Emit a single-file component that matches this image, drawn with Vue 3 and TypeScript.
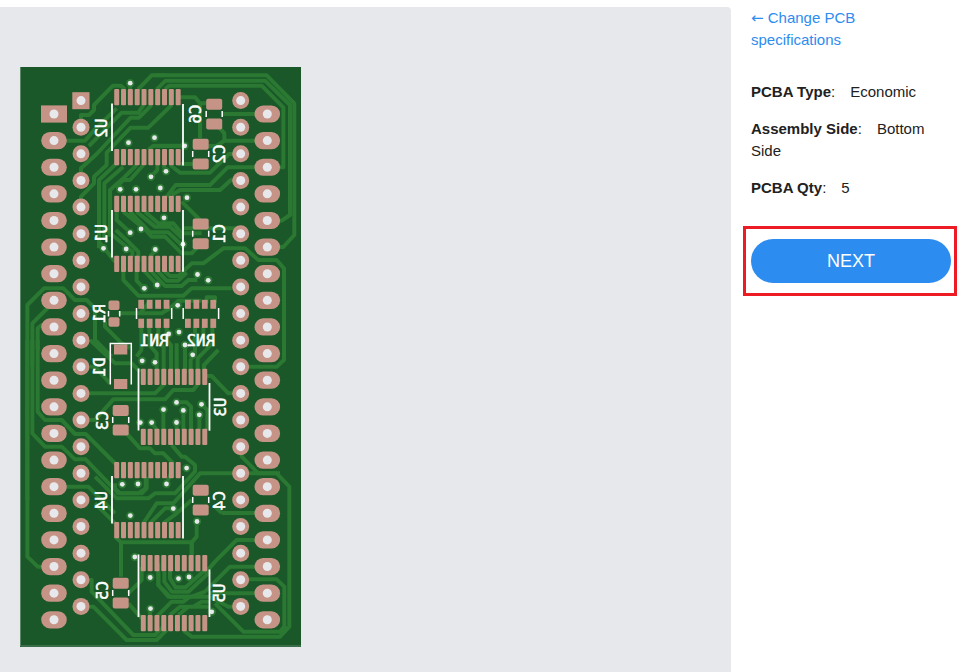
<script setup lang="ts">
interface Chip { x: number; y: number; lines: [number, number, number][] }
interface Trace { x: number; y: number; d: string }
interface Label { t: string; x: number; y: number }

const specs = [
  { label: 'PCBA Type', value: 'Economic' },
  { label: 'Assembly Side', value: 'Bottom Side' },
  { label: 'PCBA Qty', value: '5' },
]

const pitch = 26.62
const rows = Array.from({ length: 19 }, (_, i) => i + 1)
const outerY = (i: number): number => 114 + i * pitch
const innerY = (i: number): number => 100.6 + i * pitch

const chips: Chip[] = [
  { x: 114.2, y: 89, lines: [[112, 103.5, 151], [183, 104, 165.5]] },
  { x: 114.2, y: 195.7, lines: [[112, 210, 257.5], [183, 210, 271.7]] },
  { x: 140.8, y: 368.7, lines: [[138.5, 368.5, 430.5], [209.5, 383, 430.7]] },
  { x: 114.2, y: 462, lines: [[112, 476, 523.5], [183, 476, 538.5]] },
  { x: 140.8, y: 555, lines: [[138.5, 554.5, 617], [209.5, 569.5, 617]] },
]
const capacitors = [[214.2, 114], [200.7, 154], [200.7, 233.8], [120.7, 420.1], [200.7, 500], [120.7, 593]]
const networks = [141.3, 188]

const vertical: Label[] = [
  { t: 'U2', x: 106.5, y: 128 }, { t: 'U1', x: 106.5, y: 233.5 },
  { t: 'R1', x: 104.8, y: 313.5 }, { t: 'D1', x: 105.3, y: 367 },
  { t: 'C3', x: 107.5, y: 420.5 }, { t: 'U4', x: 106.5, y: 500.5 },
  { t: 'C5', x: 107.5, y: 590.5 }, { t: 'C6', x: 201, y: 114 },
  { t: 'C2', x: 225, y: 154 }, { t: 'C1', x: 225, y: 233.5 },
  { t: 'U3', x: 226.3, y: 407 }, { t: 'C4', x: 224.7, y: 500.5 },
  { t: 'U5', x: 225, y: 593 },
]
const horizontal: Label[] = [{ t: 'RN1', x: 154.3, y: 346 }, { t: 'RN2', x: 200.7, y: 346 }]

const vias = [
  [130.2, 83.2], [128.5, 142.7], [154.5, 137.7], [184.7, 145.8], [166, 171.3], [151, 176.8],
  [120.2, 189.3], [136, 189.3], [160.3, 188], [187, 197.7], [164, 217.8], [130.2, 232.7],
  [141, 229], [126.2, 249], [155.3, 249.5], [103.5, 248.3], [183, 244.2], [144.3, 288.3],
  [157.2, 285], [197.5, 274.5], [208.2, 280.3], [177.7, 305.3], [168.7, 334], [179, 332.1],
  [185, 345], [192.7, 354.8], [142.2, 360.8], [155, 362.3], [176.5, 402.4], [163.5, 409.6],
  [183.3, 410.4], [201.5, 404.3], [199.3, 414.8], [176.5, 422.5], [140.3, 422.6], [151.7, 422.6],
  [186.6, 468.1], [122.3, 484.3], [138, 484], [166.5, 484], [173.3, 508.6], [130.3, 515.6],
  [197, 521.5], [134.8, 557], [150.2, 577.5], [178.5, 578.6], [189, 577], [150.5, 608.6], [211.8, 611.8],
]

/* Copper segments: each path is in thirds of a unit from its own origin. */
const traces: Trace[] = [
  { x: 15, y: 60, d: 'M198 200V165H222L237 150V135L294 77H318L330 88M150 242H210L240 208L305 145M222 258L320 158H370L386 135M198 340V325L245 282L347 173H372L410 135M198 420V410L237 370V350L275 315V278L347 203H400L470 135M345 70V95M369 88L410 46H450' },
  { x: 155, y: 60, d: 'M0 46H335L418 130V525L385 561H340M5 88L32 62H330L405 135V465L380 482H340M30 88L42 77H320L385 142V322H340M70 112H120L135 130V235M130 130H178M200 162H340M190 200L208 220V242H340M208 242L185 258H160M0 258H95M70 312H140M45 315L75 338H165L222 282H257M35 410L62 375H165L218 322H337M50 405L75 390H195L228 360H257M80 425L135 480M85 505H257' },
  { x: 95, y: 70, d: 'M160 240L175 227H265M12 535V330L65 280M28 510V340L85 290M45 500V360L90 320L125 285M12 515L60 575M28 475L112 545V560M62 480L105 520L130 545V575M187 285V300L168 320M205 285L213 303M145 285L105 330H85L62 352M85 425L150 478L170 500H210L260 550H290L318 520M125 425L180 470H225L262 505M150 425L190 460H235L260 490H320M105 425L165 487H220L263 528M182 540L165 560M65 425V450L105 487' },
  { x: 95, y: 70, d: 'M85 600V630L130 677H265L290 655H410M125 600V632L147 655M145 600L187 645M165 600L210 648H260L280 630H307M185 600L215 632H250L275 608M205 600L225 618H250L290 580H325L385 535H450L490 570H545L567 595V850M70 730H130M130 730H200L225 715L250 692H320M335 700V682H360V700M135 730L160 700' },
  { x: 95, y: 310, d: 'M139 50V120L125 140M163 50V105L185 130V190M190 50V95L206 112V190M215 50V90L228 105V190M245 100V190M270 105V190M297 135L287 150V190M300 50V90L270 110M325 50V80L300 105V130M352 50V100L308 145V190M370 120L327 165V190' },
  { x: 15, y: 200, d: 'M37 900V315L87 265H145L180 300H215L240 325V420L290 470M52 500V370L117 305M68 450V385L80 375H117M270 365V380L320 430L345 445' },
  { x: 15, y: 340, d: 'M37 0V650L68 680H117M52 0V280L90 320H140L180 358H212L310 460H380L395 445V410M68 0V215L90 240H140L180 282H212L305 375M225 0L300 70H350L375 95M222 160H420L450 130M222 240H240L295 178H450L475 150H535L550 130M225 80H240L285 130M117 440H220L300 520M330 275L375 325H405L420 340H445L475 370' },
  { x: 95, y: 350, d: 'M230 285L260 320H270L300 345V365L240 430H180L160 445H65L0 380M555 370H315L235 460H185L145 520M60 400V415L75 430H130L152 415V385M235 475H210L165 520M290 450L245 490L205 520M230 335V365L215 400M335 78H350L400 130H435M205 180V240M265 180V240M245 157H275L288 170V240M313 195V240M245 217V240M320 163L337 180V240M170 217L185 240M60 560L78 577H290L305 560V515M78 577V680M290 577V615M60 520L0 460' },
  { x: 155, y: 490, d: 'M150 250L180 215L245 150H337M10 250V285L40 320H110L150 305L225 230H337M28 245V275L50 305H100L165 245M45 240V265L62 292H92L150 240M165 310H337M5 380L50 335H85L105 320H165M45 375L75 350H115L140 335H165M70 375L100 350H165M180 340L265 425H375L388 410V290L365 268H257M90 375V425L110 440H375L403 410V-10L365 -50H310L260 -100V-130M165 320L220 350H257M200 69H337M175 45L200 69M110 155V200' },
  { x: 155, y: 340, d: 'M257 80H365L387 60V0' },
  { x: 15, y: 490, d: 'M198 270H230V305L355 435H420L445 410M198 350H235L335 450H425L455 420M340 310L380 270V230M340 340L380 385M405 355V380M430 220V285L465 320H530' },
]
</script>

<template>
  <main class="page">
    <section class="preview" aria-label="Board preview">
      <svg class="board" viewBox="20 67 281 579.5" role="img" aria-label="Bottom side of the board">
        <rect x="20" y="67" width="281" height="580" fill="#1a5729" />
        <path d="M20.5 67V646H301" fill="none" stroke="#5b8668" />
        <g class="traces">
          <path v-for="(t, i) in traces" :key="i" :d="t.d" :transform="`translate(${t.x} ${t.y}) scale(.33333)`" />
        </g>
        <g v-for="(v, i) in vias" :key="'v' + i">
          <circle :cx="v[0]" :cy="v[1]" r="4.2" fill="#2a7832" />
        </g>
        <g class="pads">
          <rect x="41" y="105.4" width="26" height="17.2" />
          <rect x="72.3" y="92.2" width="17.2" height="17" />
          <circle cx="240.7" cy="100.6" r="8.5" />
          <rect x="254.5" y="105.4" width="25.6" height="17.2" rx="8.6" />
          <g v-for="r in rows" :key="r">
            <rect x="41.2" :y="outerY(r) - 8.6" width="25.6" height="17.2" rx="8.6" />
            <rect x="254.5" :y="outerY(r) - 8.6" width="25.6" height="17.2" rx="8.6" />
            <circle cx="81" :cy="innerY(r)" r="8.5" />
            <circle cx="240.7" :cy="innerY(r)" r="8.5" />
          </g>
          <g v-for="(c, i) in chips" :key="'u' + i">
            <g v-for="n in 10" :key="n">
              <rect :x="c.x + (n - 1) * 6.83" :y="c.y" width="5" height="16.2" rx="1" />
              <rect :x="c.x + (n - 1) * 6.83" :y="c.y + 60.1" width="5" height="16.2" rx="1" />
            </g>
          </g>
          <g v-for="(c, i) in capacitors" :key="'c' + i">
            <rect :x="c[0] - 8" :y="c[1] - 15.2" width="16" height="11" rx="2" />
            <rect :x="c[0] - 8" :y="c[1] + 4.4" width="16" height="11" rx="2" />
          </g>
          <g v-for="x in networks" :key="x">
            <g v-for="n in 4" :key="n">
              <rect :x="x - 3 + (n - 1) * 8.45" y="299.8" width="5.8" height="9" />
              <rect :x="x - 3 + (n - 1) * 8.45" y="318.7" width="5.8" height="9.2" />
            </g>
          </g>
          <rect x="108.5" y="300.5" width="11" height="9.6" rx="2" />
          <rect x="108.5" y="317.2" width="11" height="9.6" rx="2" />
          <rect x="114" y="344.5" width="13.3" height="10" />
          <rect x="114" y="379" width="13.3" height="10" />
        </g>
        <g class="holes">
          <g v-for="r in [0, ...rows]" :key="r">
            <circle cx="54" :cy="outerY(r)" r="4.5" />
            <circle cx="267.3" :cy="outerY(r)" r="4.5" />
            <circle cx="81" :cy="innerY(r)" r="4.5" />
            <circle cx="240.7" :cy="innerY(r)" r="4.5" />
          </g>
          <circle v-for="(v, i) in vias" :key="'h' + i" :cx="v[0]" :cy="v[1]" r="2.4" />
        </g>
        <g class="silk">
          <g v-for="(c, i) in chips" :key="'l' + i">
            <path v-for="l in c.lines" :key="l[0]" :d="`M${l[0]} ${l[1]}V${l[2]}`" />
          </g>
          <path v-for="(c, i) in capacitors" :key="'m' + i" class="thin" :d="`M${c[0] - 8} ${c[1] - 3}v6M${c[0] + 8} ${c[1] - 3}v6`" />
          <path class="thin" d="M108.5 311v5.5M119.7 311v5.5M110.3 384.5V343.5H131.3V384.5M136.5 308v11M171.7 308v11M183.2 308v11M218.6 308v11" />
        </g>
        <g class="labels">
          <text v-for="l in vertical" :key="l.t" :transform="`translate(${l.x} ${l.y}) scale(-1 1) rotate(90)`">{{ l.t }}</text>
          <text v-for="l in horizontal" :key="l.t" :transform="`translate(${l.x} ${l.y}) scale(-1 1)`">{{ l.t }}</text>
        </g>
      </svg>
    </section>

    <aside class="summary">
      <a class="back" href="#"><span class="arrow">←</span> Change PCB specifications</a>
      <dl class="specs">
        <div v-for="s in specs" :key="s.label" class="spec">
          <dt><b>{{ s.label }}</b>:</dt>
          <dd>{{ s.value }}</dd>
        </div>
      </dl>
      <div class="highlight">
        <button class="next" type="button">NEXT</button>
      </div>
    </aside>
  </main>
</template>

<style>
body {
  background: #fff;
}
</style>

<style scoped>
.page {
  display: flex;
  box-sizing: border-box;
  min-height: 100vh;
  padding-top: 7px;
  color: #212121;
  font: 15px/22px "Liberation Sans", Arial, sans-serif;
}
.preview {
  flex: 1;
  min-width: 0;
  box-sizing: border-box;
  padding: 60px 20px 25px;
  border-top-right-radius: 4px;
  background: #e7e8ec;
}
.board {
  display: block;
  width: 281px;
  max-width: 100%;
}
.traces {
  fill: none;
  stroke: #2a7832;
  stroke-width: 12;
  stroke-linejoin: round;
}
.pads {
  fill: #c69486;
}
.holes {
  fill: #e7e8ec;
}
.silk {
  fill: none;
  stroke: #fff;
  stroke-width: 1.8;
}
.thin {
  stroke-width: 1.5;
}
.labels {
  fill: #fff;
  stroke: #fff;
  stroke-width: 0.5;
  font: 16px "DejaVu Sans Mono", monospace;
  text-anchor: middle;
}
.summary {
  width: 216px;
  flex: none;
  padding: 0 0 0 12px;
}
.back {
  display: block;
  margin: 0 40px 0 8px;
  color: #2d8cf0;
  text-decoration: none;
}
.arrow {
  font-family: "DejaVu Sans", sans-serif;
  line-height: 1;
}
.specs {
  display: grid;
  gap: 15px;
  margin: 30px 8px 0;
}
.spec dt,
.spec dd {
  display: inline;
  margin: 0;
}
.spec dt {
  margin-right: 15px;
}
.highlight {
  box-sizing: border-box;
  width: 214px;
  margin-top: 27px;
  padding: 10px 3px 10px 5px;
  border: 3px solid #ed1c24;
}
.next {
  display: block;
  width: 100%;
  height: 44px;
  padding: 0;
  border: 0;
  border-radius: 22px;
  background: #2d8cf0;
  color: #fff;
  font: 18px/44px "Liberation Sans", Arial, sans-serif;
}
</style>
